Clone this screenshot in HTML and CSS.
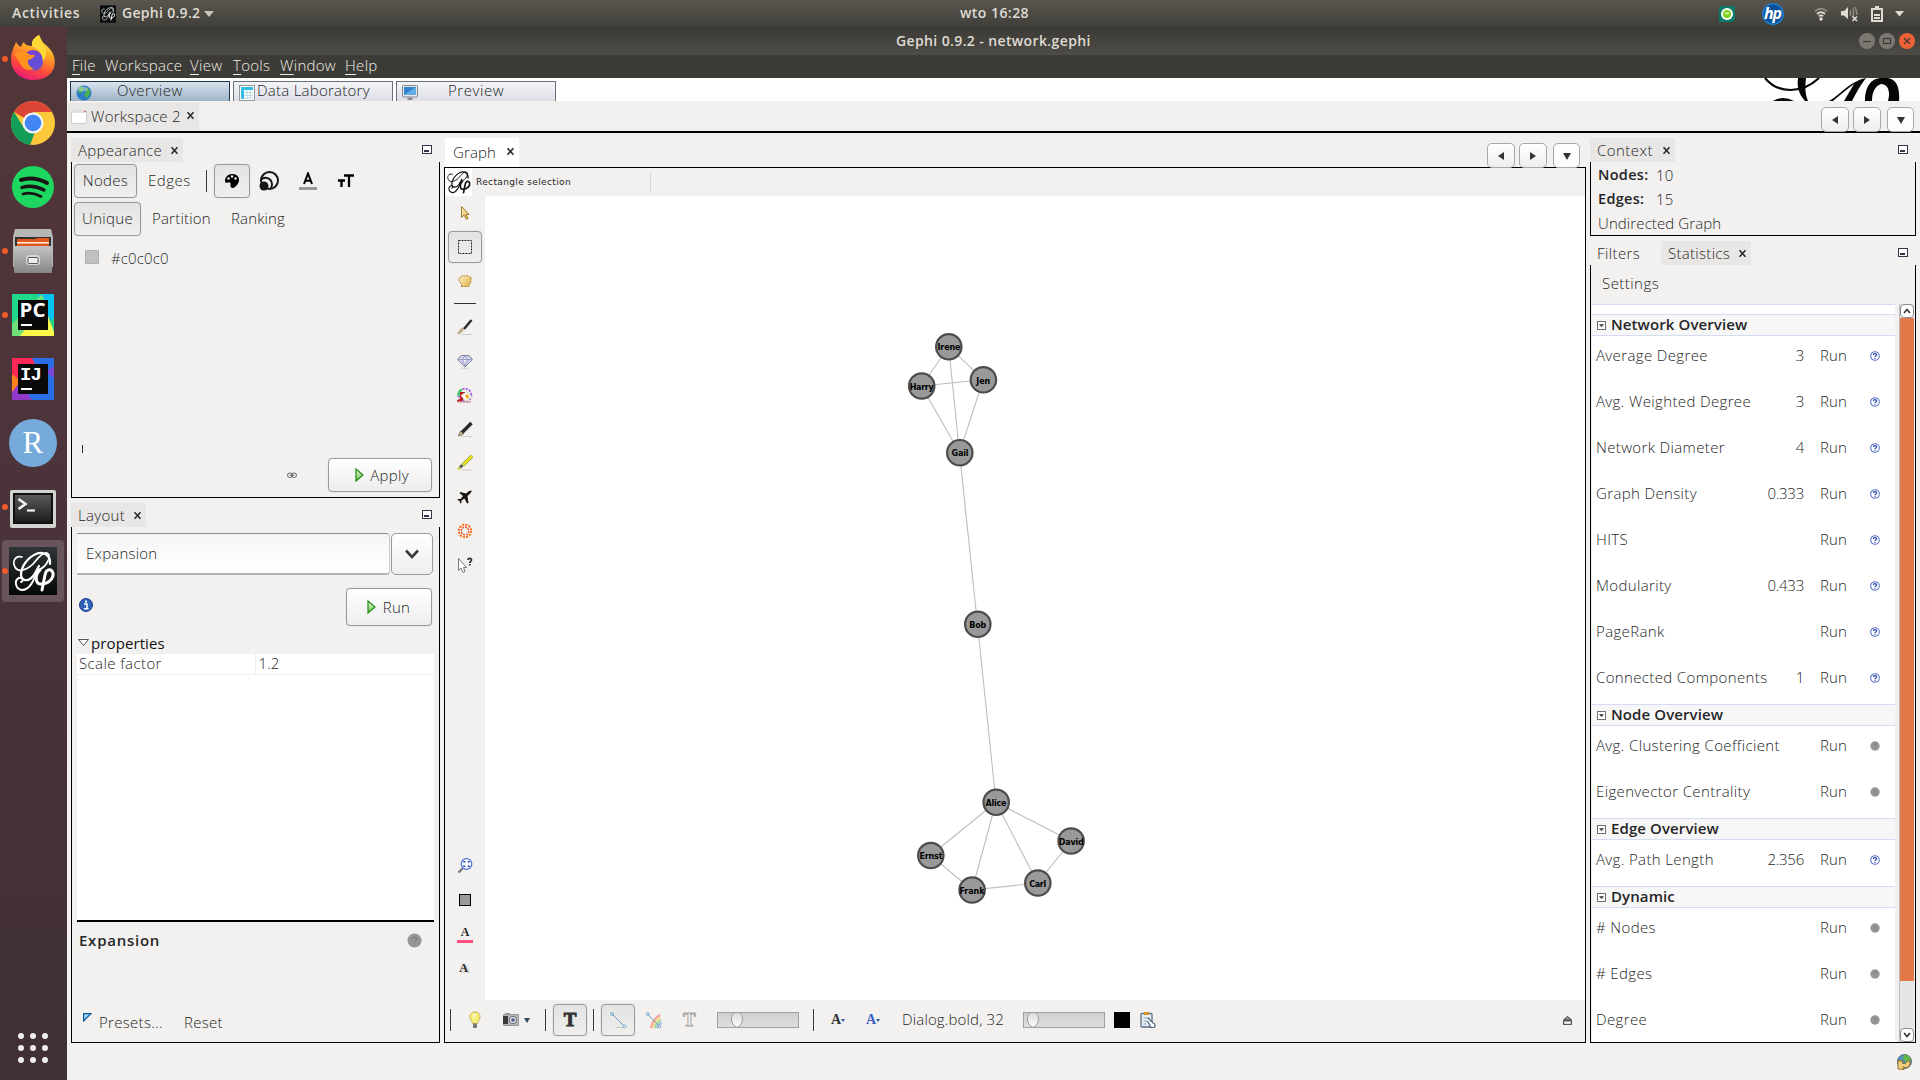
FILE: index.html
```html
<!DOCTYPE html>
<html lang="en">
<head>
<meta charset="utf-8">
<title>Gephi 0.9.2 - network.gephi</title>
<link rel="stylesheet" href="styles.css">
</head>
<body>
<svg class="defs" width="0" height="0">
  <defs>
    <linearGradient id="gGreen" x1="0" y1="0" x2="0" y2="1"><stop offset="0" stop-color="#f4fbe9"/><stop offset="1" stop-color="#6cc045"/></linearGradient>
    <linearGradient id="gGold" x1="0" y1="0" x2="1" y2="1"><stop offset="0" stop-color="#fff3cf"/><stop offset="1" stop-color="#dfae3c"/></linearGradient>
    <linearGradient id="gFox" x1="0.7" y1="0" x2="0.3" y2="1"><stop offset="0" stop-color="#fff44f"/><stop offset=".35" stop-color="#ffa524"/><stop offset=".7" stop-color="#ff4a3a"/><stop offset="1" stop-color="#e6177d"/></linearGradient>
    <linearGradient id="gTerm" x1="0" y1="0" x2="0" y2="1"><stop offset="0" stop-color="#5a5a5a"/><stop offset="1" stop-color="#1c1c1c"/></linearGradient>
    <linearGradient id="gFile" x1="0" y1="0" x2="0" y2="1"><stop offset="0" stop-color="#c4c4c4"/><stop offset="1" stop-color="#868686"/></linearGradient>
    <linearGradient id="gGephi" x1="0" y1="0" x2="0" y2="1"><stop offset="0" stop-color="#2f3436"/><stop offset="1" stop-color="#060808"/></linearGradient>
    <linearGradient id="gThumb" x1="0" y1="0" x2="0" y2="1"><stop offset="0" stop-color="#dcdcdc"/><stop offset="1" stop-color="#ffffff"/></linearGradient>
    <symbol id="help" viewBox="0 0 10 10"><circle cx="5" cy="5" r="4.300" fill="#fff" stroke="#5a74c8" stroke-width="1.100"/><path d="M3.400 4C3.400 2.200 6.600 2.200 6.600 4 6.600 5 5 5 5 5.900M5 6.700V7.800" fill="none" stroke="#2c4ba8" stroke-width="1.300"/></symbol>
    <symbol id="helpOff" viewBox="0 0 10 10"><circle cx="5" cy="5" r="4.7" fill="#969696"/><path d="M3.6 4C3.6 2.4 6.4 2.4 6.4 4 6.4 5 5 5 5 5.9M5 6.7V7.6" fill="none" stroke="#808080" stroke-width="1"/></symbol>
    <symbol id="mini" viewBox="0 0 10 9"><rect x=".5" y=".5" width="9" height="8" fill="#fff" stroke="#33364a"/><rect x="2" y="5" width="5" height="2" fill="#33364a"/></symbol>
    <symbol id="toggle" viewBox="0 0 9 9"><rect x=".5" y=".5" width="8" height="8" fill="#fff" stroke="#707070"/><path d="M2 3.2H7L4.5 6Z" fill="#333"/></symbol>
    <symbol id="play" viewBox="0 0 9 14"><path d="M1 1V13L8 7Z" fill="url(#gGreen)" stroke="#1f8a12" stroke-width="1.2"/></symbol>
    <symbol id="x" viewBox="0 0 9 9"><path d="M1.5 1.2L7.5 7.8M7.5 1.2L1.5 7.8" stroke="#2b2b2b" stroke-width="1.6"/></symbol>
    <symbol id="script" viewBox="0 0 48 48">
      <g fill="none" stroke="currentColor" stroke-linecap="round">
        <path stroke-width="1.700" d="M13 10C6 8 3 15 6 20C9 26 18 23 24 17C30 10 34 5 38 6C43 9 38 20 29 23"/>
        <path stroke-width="2.200" d="M41 17C42 8 34 4 27 7C18 11 12 20 12 28C13 35 20 35 25 28L30 19"/>
        <path stroke-width="1.900" d="M28 24C25 33 21 43 13 43C6 42 5 33 10 31C14 30 15 34 12 35"/>
        <path stroke-width="3" d="M31 23C26 27 26 36 31 37C39 38 45 31 44 26C42 21 37 22 36 28L33 43"/>
      </g>
    </symbol>
  </defs>
</svg>

<header class="topbar">
  <span class="activities">Activities</span>
  <svg class="app-ico" width="16" height="18" viewBox="0 0 48 52"><rect width="48" height="52" fill="#0c0f10"/><use href="#script" width="48" height="50" color="#fff"/></svg>
  <span class="app-name">Gephi 0.9.2</span>
  <svg width="10" height="6" viewBox="0 0 10 6"><path d="M0 0H10L5 6Z" fill="#c9c6be"/></svg>
  <span class="clock">wto 16:28</span>
  <div class="tray">
    <svg width="16" height="16" viewBox="0 0 16 16"><path d="M4 0H16V12Q16 16 12 16H0V4Q0 0 4 0Z" fill="#0b7a66"/><circle cx="8" cy="8" r="6" fill="#fff"/><circle cx="8" cy="8" r="4" fill="#7bd21c"/><ellipse cx="8" cy="7.3" rx="2.4" ry="1.2" fill="#c7f08c"/></svg>
    <svg class="hp" width="22" height="22" viewBox="0 0 22 22"><circle cx="11" cy="11" r="11" fill="#1b7fd0"/><circle cx="11" cy="11" r="9.500" fill="#0a4f9c"/><text x="10.500" y="15.500" text-anchor="middle" class="hp-t">hp</text></svg>
    <svg class="wifi" width="14" height="14" viewBox="0 0 14 14"><g fill="none" stroke-width="1.8"><path d="M1 4.5Q7-1 13 4.5" stroke="#8f8c84"/><path d="M3 7Q7 3.5 11 7" stroke="#dfdbd2"/><path d="M4.8 9.3Q7 7.5 9.2 9.3" stroke="#dfdbd2"/></g><circle cx="7" cy="12" r="1.8" fill="#dfdbd2"/></svg>
    <svg class="vol" width="17" height="16" viewBox="0 0 17 16"><path d="M0 5H3L7 1V13L3 9.500H0Z" fill="#dfdbd2"/><path d="M9 4.500Q10.500 7 9 9.500M11.500 2.500Q14 7 11.500 11M13.500 1Q16.500 5 15.500 9" fill="none" stroke="#8f8c84" stroke-width="1.5"/><path d="M11.500 10.500L16 15M16 10.500L11.500 15" stroke="#dfdbd2" stroke-width="1.700"/></svg>
    <svg class="bat" width="12" height="16" viewBox="0 0 12 16"><path d="M4 0H8V2H12V16H0V2H4Z" fill="#dfdbd2"/><path d="M2 4H10V14H2Z" fill="#494741"/><path d="M3 9H9M3 12H9" stroke="#dfdbd2" stroke-width="2"/></svg>
    <svg class="dn" width="9" height="6" viewBox="0 0 9 6"><path d="M0 0H9L4.500 5.500Z" fill="#dfdbd2"/></svg>
  </div>
</header>

<div class="desktop">
  <nav class="dock">
    <div class="slot on firefox"><svg width="46" height="48" viewBox="0 0 46 48"><path d="M23 46C9 46 1 36 1 25C1 18 4 13 6 8Q8 12 11 13Q12 9 14 8Q15 12 22 12Q21 5 29 1Q30 7 37 12C46 20 46 30 43 36C39 43 32 46 23 46Z" fill="url(#gFox)"/><circle cx="23" cy="26" r="10" fill="#7543d6"/><circle cx="25" cy="29" r="8" fill="#5a55d8" opacity=".6"/><path d="M4 20Q12 14 20 21Q25 20 25 22Q22 25 18 26Q17 32 24 35Q15 38 11 31Q8 25 4 20Z" fill="#ff9320"/><path d="M22 12Q32 16 33 27Q38 21 35 13L29 1Q21 5 22 12Z" fill="#ffd83a"/></svg></div>
    <div class="slot chrome"><svg width="44" height="44" viewBox="0 0 44 44"><circle cx="22" cy="22" r="22" fill="#fcc93a"/><path d="M22 22L3 11A22 22 0 0 1 41 11H22Z" fill="#dc4437"/><path d="M3 11L13 27L24 31L19 44A22 22 0 0 1 3 11Z" fill="#129d58"/><circle cx="22" cy="22" r="10.500" fill="#f4f4f4"/><circle cx="22" cy="22" r="8.300" fill="#4285f4"/></svg></div>
    <div class="slot spotify"><svg width="42" height="42" viewBox="0 0 42 42"><circle cx="21" cy="21" r="21" fill="#1ed760"/><g fill="none" stroke="#191414" stroke-linecap="round"><path d="M9 14Q22 10 35 17" stroke-width="4"/><path d="M10 21.500Q21 18 32 24" stroke-width="3.400"/><path d="M11 28Q20 25.500 29 30.500" stroke-width="2.800"/></g></svg></div>
    <div class="slot on files"><svg width="44" height="44" viewBox="0 0 44 44"><path d="M4 0H40L42 8V38H2V8Z" fill="#b6b6b6"/><rect x="4" y="8" width="36" height="10" fill="#33302e"/><path d="M6 10H24L26 9H38V18H6Z" fill="#e2571d"/><path d="M6 13H38V14.500H6Z" fill="#fff1e2"/><rect x="3" y="17" width="38" height="27" rx="1" fill="url(#gFile)"/><rect x="15" y="26" width="14" height="10" rx="3" fill="#d6d6d6"/><rect x="17" y="28.500" width="10" height="6" rx="1" fill="#eee" stroke="#555"/></svg></div>
    <div class="slot on pycharm"><svg width="42" height="42" viewBox="0 0 42 42"><rect width="42" height="42" fill="#21d789"/><path d="M26 0H42V24L28 34Z" fill="#07c3f2"/><path d="M0 30L22 8L30 0L34 10 10 42H0Z" fill="#6fe07a"/><path d="M34 42H8L30 14 36 22L42 38V42Z" fill="#fcf84a"/><rect x="6" y="6" width="30" height="30" fill="#0a0a0a"/><text x="7.500" y="23" class="jb" textLength="26" lengthAdjust="spacingAndGlyphs">PC</text><rect x="9" y="30" width="11" height="2" fill="#fff"/></svg></div>
    <div class="slot idea"><svg width="42" height="42" viewBox="0 0 42 42"><rect width="42" height="42" fill="#2a6fe8"/><path d="M0 0H20L26 12 10 20H0Z" fill="#fe2857"/><path d="M0 16L10 24 6 34H0Z" fill="#fc801d"/><path d="M0 34L8 24 20 42H0Z" fill="#9038c8"/><path d="M34 14L42 8V20Z" fill="#7a45d0"/><rect x="6" y="6" width="30" height="30" fill="#0a0a0a"/><text x="8" y="22" class="ij">IJ</text><rect x="9" y="30" width="11" height="2" fill="#fff"/></svg></div>
    <div class="slot rstudio"><div class="r-ball">R</div></div>
    <div class="slot on term"><svg width="46" height="38" viewBox="0 0 46 38"><rect width="46" height="38" rx="2" fill="#d3d3d0"/><rect x="3" y="3" width="40" height="31" fill="#111"/><rect x="5" y="5" width="36" height="27" fill="url(#gTerm)"/><path d="M8.500 9L15.500 14 8.500 19" fill="none" stroke="#f1f1ee" stroke-width="2.600"/><path d="M17 20.500H25" stroke="#f1f1ee" stroke-width="2.200"/></svg></div>
    <div class="slot on gephi"><div class="tile"><svg width="48" height="48" viewBox="0 0 48 48"><rect width="48" height="48" fill="url(#gGephi)"/><use href="#script" width="48" height="48" color="#fff"/></svg></div></div>
    <div class="apps"><i></i><i></i><i></i><i></i><i></i><i></i><i></i><i></i><i></i></div>
  </nav>

  <div class="window">
    <div class="titlebar"><span class="title">Gephi 0.9.2 - network.gephi</span>
      <svg class="wm" width="56" height="16" viewBox="0 0 56 16"><circle cx="8" cy="8" r="8" fill="#7a7871"/><circle cx="28" cy="8" r="8" fill="#7a7871"/><circle cx="48" cy="8" r="8" fill="#ee6237"/><g fill="none" stroke="#3a3935" stroke-width="1.200"><path d="M4 8.500H12"/><rect x="24.500" y="5.500" width="7" height="5"/><path d="M45 5L51 11M51 5L45 11"/></g></svg>
    </div>
    <div class="menubar"><span class="m1"><u>F</u>ile</span><span class="m2">Workspace</span><span class="m3"><u>V</u>iew</span><span class="m4"><u>T</u>ools</span><span class="m5"><u>W</u>indow</span><span class="m6"><u>H</u>elp</span></div>

    <div class="persp">
      <div class="pt active"><svg width="16" height="16" viewBox="0 0 16 16"><circle cx="8" cy="8" r="7.500" fill="#2c7fc4"/><path d="M3 2Q8 1 8 4L5 8 2 7ZM9 3Q15 3 14 9L11 13 8 10 10 7Z" fill="#4bb04b"/><ellipse cx="7" cy="4" rx="5" ry="2.500" fill="#fff" opacity=".35"/></svg><span class="w-ov">Overview</span></div>
      <div class="pt"><svg width="16" height="16" viewBox="0 0 16 16"><rect x=".5" y=".5" width="15" height="15" fill="#fff" stroke="#8e9aa0"/><rect x="2" y="2" width="12" height="3" fill="#35bfe8"/><rect x="2" y="2" width="3" height="12" fill="#35bfe8"/><path d="M5 7.500H14M5 10.500H14M5 13H14M8 5V14M11 5V14" stroke="#b8dce8"/></svg><span class="w-dl">Data Laboratory</span></div>
      <div class="pt"><svg width="16" height="16" viewBox="0 0 16 16"><rect x=".5" y=".5" width="15" height="11.500" rx="1" fill="#e8e8e8" stroke="#808890"/><rect x="2" y="2" width="12" height="8" fill="#2d84cc"/><path d="M2 10L14 2V10Z" fill="#62b0e6"/><path d="M5.500 12.500H10.500V15H5.500Z" fill="#8b8b8b"/></svg><span class="w-pv">Preview</span></div>
      <svg class="biglogo" width="145" height="23" viewBox="0 0 145 23"><path d="M5 0C18 16 42 16 59 0" fill="none" stroke="#070707" stroke-width="2.200"/><path d="M38 0H46C45 8 45 16 48 23H45C38 15 37 8 38 0Z" fill="#070707"/><path d="M13 23Q23 17 34 23Z" fill="#070707"/><path d="M69 23C81 16 90 3 106 0C100 8 96 15 92 23H84L94 6C87 11 80 17 73 23Z" fill="#070707"/><path d="M105 23C105 10 110 0 122 0C137 -2 140 10 139 23H128C131 12 127 6 121 6C115 8 112 14 112 23Z" fill="#070707"/></svg>
    </div>

    <div class="wsrow">
      <div class="wstab"><svg width="16" height="14" viewBox="0 0 16 14"><rect x=".5" y="1" width="15" height="12.500" rx="1.500" fill="#fff" stroke="#cfcccb"/><path d="M1 1H15V3H1Z" fill="#e4e0df"/><path d="M13 1.500H15" stroke="#d55"/></svg><span>Workspace 2</span><svg width="9" height="9"><use href="#x"/></svg></div>
      <div class="navs"><b><svg width="8" height="8" viewBox="0 0 8 8"><path d="M7 0V8L1 4Z"/></svg></b><b><svg width="8" height="8" viewBox="0 0 8 8"><path d="M1 0V8L7 4Z"/></svg></b><b class="last"><svg width="8" height="8" viewBox="0 0 8 8"><path d="M0 1H8L4 8Z"/></svg></b></div>
    </div>

    <main class="work">
      <section class="left">
        <div class="tabs"><div class="tab t-app"><span>Appearance</span><svg width="9" height="9"><use href="#x"/></svg></div><svg class="min" width="10" height="9"><use href="#mini"/></svg></div>
        <div class="panel appearance">
          <div class="brow"><span class="btn down nodes">Nodes</span><span class="edges">Edges</span><i class="vsep"></i>
            <span class="btn down pal"><svg width="16" height="16" viewBox="0 0 16 16"><path d="M8 1C3 1 1 5 1 8C1 10 3 10 4 9.500C6 9 7 10 6.500 12C6 15 9 16 11 14C13 12 15 10 15 7C15 3 12 1 8 1Z" fill="#000"/><circle cx="4.500" cy="5.500" r="1.200" fill="#fff"/><circle cx="8" cy="3.500" r="1.200" fill="#fff"/><circle cx="11.500" cy="5.500" r="1.200" fill="#fff"/></svg></span>
            <svg class="i-size" width="20" height="20" viewBox="0 0 20 20"><g fill="none" stroke="#151515" stroke-width="2"><circle cx="10.500" cy="9.500" r="8.500"/><path d="M2 8.500A5.500 5.500 0 1 1 11 18"/></g><circle cx="5" cy="15" r="4.500" fill="#151515"/></svg>
            <svg class="i-col" width="18" height="18" viewBox="0 0 18 18"><path d="M5 12L9 1.500L13 12M6.400 8.700H11.600" fill="none" stroke="#000" stroke-width="2"/><rect y="15" width="18" height="3" fill="#999"/></svg>
            <svg class="i-tt" width="16" height="14" viewBox="0 0 16 14"><path d="M6 1.500H16M11 1V13M0 6.500H7M3.500 6V13" fill="none" stroke="#000" stroke-width="2.300"/></svg>
          </div>
          <div class="brow second"><span class="btn down uniq">Unique</span><span class="part">Partition</span><span class="rank">Ranking</span></div>
          <div class="color"><i></i><span>#c0c0c0</span></div>
          <i class="caret"></i>
          <div class="apply"><svg width="10" height="7" viewBox="0 0 10 7"><rect x=".5" y="1" width="5" height="4.500" rx="2.200" fill="none" stroke="#666"/><rect x="4.500" y="1" width="5" height="4.500" rx="2.200" fill="none" stroke="#666"/><path d="M2.500 3.200H7.500" stroke="#666"/></svg><span class="btn b-apply"><svg width="9" height="14"><use href="#play"/></svg><span>Apply</span></span></div>
        </div>
        <div class="tabs lay"><div class="tab t-lay"><span>Layout</span><svg width="9" height="9"><use href="#x"/></svg></div><svg class="min" width="10" height="9"><use href="#mini"/></svg></div>
        <div class="panel layout">
          <div class="combo"><span>Expansion</span><b><svg width="14" height="10" viewBox="0 0 14 10"><path d="M1 1.500L7 8 13 1.500" fill="none" stroke="#3c3c3c" stroke-width="2.600"/></svg></b></div>
          <div class="runrow"><svg width="14" height="14" viewBox="0 0 14 14"><circle cx="7" cy="7" r="6.500" fill="#2f62b8" stroke="#1d3f88"/><path d="M5 6H8V10.500M5 10.800H9.500" stroke="#fff" stroke-width="1.500" fill="none"/><rect x="6" y="2.500" width="2" height="2" fill="#fff"/></svg><span class="btn b-run"><svg width="9" height="14"><use href="#play"/></svg><span>Run</span></span></div>
          <div class="prop"><svg width="11" height="7" viewBox="0 0 11 7"><path d="M.5 .5H10.500L5.500 6.500Z" fill="#fff" stroke="#555"/></svg><span>properties</span></div>
          <div class="sheet"><div class="srow"><span>Scale factor</span><span>1.2</span></div></div>
          <div class="desc"><b>Expansion</b><svg width="15" height="15"><use href="#helpOff"/></svg></div>
          <div class="presets"><svg width="9" height="9" viewBox="0 0 9 9"><path d="M.6 .6H8L.6 8Z" fill="#9fd2f2" stroke="#0a5ca0" stroke-width="1.200"/></svg><span class="ps">Presets...</span><span class="rs">Reset</span></div>
        </div>
      </section>

      <section class="center">
        <div class="tabs"><div class="tab t-graph"><span>Graph</span><svg width="9" height="9"><use href="#x"/></svg></div>
          <div class="navs"><b><svg width="8" height="8" viewBox="0 0 8 8"><path d="M7 0V8L1 4Z"/></svg></b><b><svg width="8" height="8" viewBox="0 0 8 8"><path d="M1 0V8L7 4Z"/></svg></b><b class="last"><svg width="8" height="8" viewBox="0 0 8 8"><path d="M0 1H8L4 8Z"/></svg></b></div></div>
        <div class="gbox">
          <div class="ghead"><svg class="glogo" width="27" height="28" viewBox="0 0 48 50"><use href="#script" width="48" height="48" y="1" color="#111"/></svg><span>Rectangle selection</span><i></i></div>
          <div class="gmid">
            <div class="tools">
              <svg class="tl" viewBox="0 0 16 16"><path d="M4.500 1.500V12.500L7 10 9.500 14.500 11 13.500 9 9.500H12Z" fill="url(#gGold)" stroke="#a07a2c"/></svg>
              <span class="btn down tl-on"><svg viewBox="0 0 16 16" width="16" height="16"><rect x="1.500" y="1.500" width="13" height="13" fill="none" stroke="#222" stroke-dasharray="2 1"/></svg></span>
              <svg class="tl" viewBox="0 0 16 16"><path d="M4.500 13.500V11L2 8V5L4 4.500 5 2.500 8 3 11 2.500 12.500 4H14V9L12 12V13.500Z" fill="url(#gGold)" stroke="#a98338" stroke-dasharray="2 1"/></svg>
              <i class="hsep"></i>
              <svg class="tl" viewBox="0 0 16 16"><path d="M4 15.500H15" stroke="#ccc"/><path d="M14.500 1L7 10" stroke="#2b2b2b" stroke-width="2.500"/><path d="M7 9.500Q5 14 1 15Q2 11 5 9Z" fill="#cdbd94" stroke="#8c7c58" stroke-width=".6"/></svg>
              <svg class="tl" viewBox="0 0 16 16"><path d="M4 2.500H12L15.500 6.500 8 14 .500 6.500Z" fill="#cfd1ea" stroke="#8083a6"/><path d="M1 6.500H15M5.500 6.500L8 13 10.500 6.500 8 3Z" fill="#e6e7f8" stroke="#9194b8" stroke-width=".8"/><path d="M4 15.200H12" stroke="#ccc"/></svg>
              <svg class="tl" viewBox="0 0 16 16"><circle cx="8" cy="8" r="6.300" fill="none" stroke="#a35be0" stroke-width="2" stroke-dasharray="2 1.300"/><path d="M1.500 9A6.300 6.300 0 0 1 5 2.500" fill="none" stroke="#42c86a" stroke-width="2.400"/><path d="M3 5H10V7L5 14.500H0V13L3 12Z" fill="#b91d22"/><path d="M4 8.500L10 4.500 15 10 9 14.500Z" fill="#fffdf2" stroke="#ccc"/><path d="M8 8L11 7.500 12.500 10 10 12Z" fill="#f0a818"/><path d="M0 15H14" stroke="#c88"/></svg>
              <svg class="tl" viewBox="0 0 16 16"><path d="M4 15.500H15" stroke="#ccc"/><path d="M14.500 2L5 11.500" stroke="#2b2b2b" stroke-width="3.600"/><path d="M3.500 10L6.500 13 1.500 15Z" fill="#d8c48a" stroke="#333" stroke-width=".6"/></svg>
              <svg class="tl" viewBox="0 0 16 16"><path d="M4 15H15" stroke="#ccc"/><path d="M15 1L6 10" stroke="#9a9414" stroke-width="3.400"/><path d="M15 1L6 10" stroke="#f1ea1c" stroke-width="2"/><path d="M5.500 10L3 12.500" stroke="#555" stroke-width="3"/><path d="M3 12.500L1 14.500" stroke="#d0c91a" stroke-width="2"/></svg>
              <svg class="tl" viewBox="0 0 16 16"><path d="M14.500 1.500Q15 3.500 10.500 7L11.500 14 10 14.500 7.500 9.500 4.500 11.500V14L3.500 14.500 2.500 12 .500 11 1 10H3.500L6 7 2.500 4 3.500 3 9 4.500Q12.500 1 14.500 1.500Z" fill="#1a1713"/></svg>
              <svg class="tl" viewBox="0 0 16 16"><g fill="none" stroke="#ff7018"><circle cx="8" cy="8" r="6.200" stroke-width="2" stroke-dasharray="2.100 1.100"/><circle cx="8" cy="8" r="3.800" stroke="#f2452a" stroke-width="1.300" stroke-dasharray="2 .9"/></g></svg>
              <svg class="tl" viewBox="0 0 16 16"><path d="M1.500 1.500V13.500L4 11 6 15.500 8 14.500 6.500 10.500H9.500Z" fill="#fff" stroke="#777"/><path d="M11 3C11 .8 14.500 .8 14.500 3 14.500 4.500 12.800 4.500 12.800 6M12.800 7V8.500" fill="none" stroke="#333" stroke-width="1.700"/></svg>
              <div class="grow"></div>
              <svg class="tl" viewBox="0 0 16 16"><path d="M5.500 10.500L1.500 14.500" stroke="#777" stroke-width="2.400"/><circle cx="9.500" cy="6" r="5.300" fill="#fff" stroke="#4b6fd4" stroke-width="1.200"/><path d="M7 5V3.500H8.500M10.500 3.500H12V5M12 7V8.500H10.500M8.500 8.500H7V7" fill="none" stroke="#2e50b8" stroke-width="1.200"/></svg>
              <svg class="tl" viewBox="0 0 16 16"><rect x="2.500" y="2.500" width="11" height="11" fill="#999" stroke="#000"/></svg>
              <div class="tl ta"><b>A</b><i></i></div>
              <div class="tl ta shade"><b>A</b></div>
            </div>
            <svg class="canvas" width="1100" height="804" viewBox="485 196 1100 804">
              <g class="e"><path d="M948.700 346.700L921.500 386M948.700 346.700L983.300 379.700M948.700 346.700L959.500 452.700M921.500 386L983.300 379.700M921.500 386L959.500 452.700M983.300 379.700L959.500 452.700M959.500 452.700L977.500 624.300L996 802.300M996 802.300L930.700 855.300M996 802.300L972 890M996 802.300L1037.700 883M996 802.300L1071 841M930.700 855.300L972 890M972 890L1037.700 883L1071 841"/></g>
              <g class="n"><circle cx="948.800" cy="346.800" r="12.700"/><circle cx="921.700" cy="386" r="12.700"/><circle cx="983.400" cy="379.800" r="12.700"/><circle cx="959.800" cy="452.700" r="12.700"/><circle cx="977.800" cy="624.300" r="12.700"/><circle cx="996.200" cy="802.300" r="12.700"/><circle cx="930.800" cy="855.500" r="12.700"/><circle cx="972.100" cy="890" r="12.700"/><circle cx="1037.800" cy="883" r="12.700"/><circle cx="1071.100" cy="841" r="12.700"/></g>
              <g class="l"><text x="949" y="350" textLength="23">Irene</text><text x="921.700" y="390" textLength="24">Harry</text><text x="983.300" y="383.500" textLength="14">Jen</text><text x="960" y="456" textLength="17">Gail</text><text x="977.700" y="627.500" textLength="17">Bob</text><text x="996" y="805.800" textLength="21">Alice</text><text x="931" y="858.800" textLength="23">Ernst</text><text x="972" y="893.500" textLength="25">Frank</text><text x="1037.700" y="886.500" textLength="17">Carl</text><text x="1071.300" y="844.500" textLength="25">David</text></g>
            </svg>
          </div>
          <div class="gfoot">
            <i class="vsep"></i>
            <svg class="f1" width="16" height="18" viewBox="0 0 16 18"><path d="M8 1C3.500 1 2 5 3.500 8C5 10.500 5 11 5.500 12.500H10.500C11 11 11 10.500 12.500 8C14 5 12.500 1 8 1Z" fill="#f8ee7c" stroke="#b6a63a" stroke-width=".8"/><path d="M6 4Q7 2.500 9 3L7 8Z" fill="#fffde0"/><rect x="6" y="12.500" width="4" height="4.500" rx="1" fill="#777"/></svg>
            <svg class="f2" width="16" height="16" viewBox="0 0 16 16"><rect y="2.500" width="16" height="11" rx="1" fill="#b5b5b5" stroke="#777" stroke-width=".7"/><rect x="0" y="4" width="5" height="8" fill="#3a3a3a"/><circle cx="10" cy="8" r="3.700" fill="#dcdce6" stroke="#777"/><circle cx="10" cy="8" r="1.800" fill="#4b5a8c"/><rect x="2" y="1" width="5" height="2" fill="#999"/></svg>
            <svg class="f3" width="6" height="5" viewBox="0 0 6 5"><path d="M0 0H6L3 5Z" fill="#33475c"/></svg>
            <i class="vsep s2"></i>
            <span class="btn down fb f4"><b>T</b></span>
            <i class="vsep s3"></i>
            <span class="btn down fb f5"><svg width="17" height="17" viewBox="0 0 17 17"><path d="M6 15.500H15" stroke="#ccc"/><path d="M2 2L15 15" stroke="#6b9cc8"/><circle cx="2" cy="2" r="1.400" fill="#fff" stroke="#6b9cc8"/><circle cx="14.500" cy="14.500" r="1.400" fill="#fff" stroke="#6b9cc8"/></svg></span>
            <svg class="f6" width="16" height="17" viewBox="0 0 16 17"><g fill="none" stroke-width="2.200"><path d="M5 16Q7 7 14 3" stroke="#f2a0a0"/><path d="M7 16Q8 9 14.500 5.500" stroke="#f7dc8c"/><path d="M9 16Q10 11 15 8" stroke="#a4dca0"/><path d="M11 16Q12 13 15.500 10.500" stroke="#a4c0ec"/></g><path d="M1.500 2L14 15" stroke="#6b9cc8"/><circle cx="1.800" cy="2" r="1.300" fill="#fff" stroke="#6b9cc8"/><circle cx="13.500" cy="14.500" r="1.300" fill="#fff" stroke="#7a88c8"/></svg>
            <b class="f7">T</b>
            <div class="slider f8"><svg width="12" height="16" viewBox="0 0 12 16"><path d="M6 .5C10 .5 11.500 3 11.500 7C11.500 11 9 14 6 15.500C3 14 .5 11 .5 7C.5 3 2 .5 6 .5Z" fill="url(#gThumb)" stroke="#999"/></svg></div>
            <i class="vsep s4"></i>
            <b class="fa">A<em></em></b><b class="fa blue">A<em></em></b>
            <span class="font">Dialog.bold, 32</span>
            <div class="slider f9"><svg width="12" height="16" viewBox="0 0 12 16"><path d="M6 .5C10 .5 11.500 3 11.500 7C11.500 11 9 14 6 15.500C3 14 .5 11 .5 7C.5 3 2 .5 6 .5Z" fill="url(#gThumb)" stroke="#999"/></svg></div>
            <i class="blk"></i>
            <svg class="f10" width="16" height="16" viewBox="0 0 16 16"><rect x="1" y="1.500" width="11" height="13.500" rx="1" fill="#e8eef4" stroke="#5a7186" stroke-width="1.300"/><rect x="4" y="0" width="5" height="3" fill="#d9962a"/><path d="M3.500 6H9.500M3.500 9H7M3.500 12H6" stroke="#8fa3b5"/><path d="M8 6L13 11A2.500 2.500 0 1 1 10 13.500L7.500 9" fill="#fff" stroke="#486078" stroke-width="1.200"/></svg>
            <svg class="f11" width="9" height="9" viewBox="0 0 9 9"><path d="M4.500 .5L8.500 4H.5Z" fill="#999" stroke="#333"/><rect x=".6" y="5" width="7.800" height="3.300" fill="#fff" stroke="#333"/></svg>
          </div>
        </div>
      </section>

      <section class="right">
        <div class="tabs"><div class="tab t-ctx"><span>Context</span><svg width="9" height="9"><use href="#x"/></svg></div><svg class="min" width="10" height="9"><use href="#mini"/></svg></div>
        <div class="panel context"><div><b>Nodes:</b><span>10</span></div><div><b class="eb">Edges:</b><span>15</span></div><div><span class="ug">Undirected Graph</span></div></div>
        <div class="tabs st"><span class="filters">Filters</span><div class="tab t-stat"><span>Statistics</span><svg width="9" height="9"><use href="#x"/></svg></div><svg class="min" width="10" height="9"><use href="#mini"/></svg></div>
        <div class="panel stats">
          <div class="settings">Settings</div>
          <div class="scroll">
            <div class="list">
              <div class="pad"></div>
              <h3><svg width="9" height="9"><use href="#toggle"/></svg><span>Network Overview</span></h3>
              <div class="row"><span>Average Degree</span><em>3</em><span>Run</span><svg><use href="#help"/></svg></div>
              <div class="row"><span>Avg. Weighted Degree</span><em>3</em><span>Run</span><svg><use href="#help"/></svg></div>
              <div class="row"><span>Network Diameter</span><em>4</em><span>Run</span><svg><use href="#help"/></svg></div>
              <div class="row"><span>Graph Density</span><em>0.333</em><span>Run</span><svg><use href="#help"/></svg></div>
              <div class="row"><span>HITS</span><em></em><span>Run</span><svg><use href="#help"/></svg></div>
              <div class="row"><span>Modularity</span><em>0.433</em><span>Run</span><svg><use href="#help"/></svg></div>
              <div class="row"><span>PageRank</span><em></em><span>Run</span><svg><use href="#help"/></svg></div>
              <div class="row"><span>Connected Components</span><em>1</em><span>Run</span><svg><use href="#help"/></svg></div>
              <h3><svg width="9" height="9"><use href="#toggle"/></svg><span>Node Overview</span></h3>
              <div class="row"><span>Avg. Clustering Coefficient</span><em></em><span>Run</span><svg><use href="#helpOff"/></svg></div>
              <div class="row"><span>Eigenvector Centrality</span><em></em><span>Run</span><svg><use href="#helpOff"/></svg></div>
              <h3><svg width="9" height="9"><use href="#toggle"/></svg><span>Edge Overview</span></h3>
              <div class="row"><span>Avg. Path Length</span><em>2.356</em><span>Run</span><svg><use href="#help"/></svg></div>
              <h3><svg width="9" height="9"><use href="#toggle"/></svg><span>Dynamic</span></h3>
              <div class="row"><span># Nodes</span><em></em><span>Run</span><svg><use href="#helpOff"/></svg></div>
              <div class="row"><span># Edges</span><em></em><span>Run</span><svg><use href="#helpOff"/></svg></div>
              <div class="row"><span>Degree</span><em></em><span>Run</span><svg><use href="#helpOff"/></svg></div>
            </div>
            <div class="bar"><b><svg width="8" height="6" viewBox="0 0 8 6"><path d="M1 5L4 1.500 7 5" fill="none" stroke="#333" stroke-width="1.600"/></svg></b><i></i><b><svg width="8" height="6" viewBox="0 0 8 6"><path d="M1 1L4 4.500 7 1" fill="none" stroke="#333" stroke-width="1.600"/></svg></b></div>
          </div>
        </div>
      </section>
    </main>
    <footer class="status"><svg width="15" height="16" viewBox="0 0 15 16"><circle cx="7.500" cy="7.500" r="7" fill="#4d94b8" stroke="#456" stroke-width=".8"/><path d="M7 1Q13 0 14 7L10 9 6 5Z" fill="#63b84c"/><path d="M1 7L6 6.500 5 9Q9 11 10 7H13V10Q12 15 6 13L7 15.500 1 15Z" fill="#f0cf7c" stroke="#8b6420" stroke-width=".9"/></svg></footer>
  </div>
</div>
</body>
</html>
```
FILE: styles.css
```css
* { box-sizing: border-box; }
body {
  margin: 0; width: 1920px; height: 1080px; overflow: hidden;
  display: flex; flex-direction: column;
  font: 300 15px/20px "Open Sans", "Noto Sans", sans-serif;
  letter-spacing: .3px; color: #262626; background: #f2f1ef;
}
svg { display: block; flex: none; }
span, em, b { white-space: nowrap; }
em, i { font-style: normal; }
i { display: block; flex: none; }
.defs { position: absolute; }

/* top bar */
.topbar {
  height: 27px; flex: none; display: flex; align-items: center; padding-left: 12px;
  background: linear-gradient(#59564e, #403f3a);
  color: #dfdbd2; font-weight: 600; font-size: 14px; letter-spacing: .1px;
}
.topbar span { padding-bottom: 2px; }
.activities { width: 88px; letter-spacing: .7px; }
.app-name { width: 76px; margin: 0 6px 0 6px; letter-spacing: .3px; }
.clock { width: 70px; margin-left: 746px; letter-spacing: .45px; }
.tray { display: flex; align-items: center; margin-left: 689px; }
.hp { margin-left: 27px; }
.wifi { margin-left: 30px; }
.vol { margin-left: 13px; }
.bat { margin-left: 13px; }
.dn { margin-left: 12px; }
.hp-t { font: italic bold 16px "Open Sans", sans-serif; fill: #fff; letter-spacing: -1px; }

.desktop { flex: 1; display: flex; min-height: 0; }

/* dock */
.dock {
  width: 67px; flex: none; display: flex; flex-direction: column;
  background: linear-gradient(#523639, #4a333a 50%, #3f3033);
}
.slot { height: 64px; display: flex; align-items: center; padding-left: 10px; position: relative; flex: none; }
.on::before { content: ""; position: absolute; left: 2px; top: 50%; width: 6px; height: 6px; margin-top: -3px; border-radius: 50%; background: #ee5a2a; }
.firefox svg { margin-top: -2px; }
.chrome { padding-left: 11px; }
.spotify, .pycharm, .idea { padding-left: 12px; }
.files { padding-left: 11px; }
.rstudio { padding-left: 9px; }
.term svg { margin-top: 3px; }
.gephi { padding-left: 2px; }
.tile { width: 62px; height: 62px; border-radius: 4px; background: rgba(255,255,255,.17); padding: 7px; }
.r-ball { width: 48px; height: 48px; border-radius: 50%; background: #75aadb; color: #fff; text-align: center; font: 31px/48px "Liberation Serif", serif; }
.jb { font: bold 20px "Open Sans", sans-serif; fill: #fff; letter-spacing: 0; }
.ij { font: bold 19px "Liberation Mono", monospace; fill: #fff; letter-spacing: -1px; }
.apps { margin: auto 0 17px 18px; display: grid; grid-template-columns: repeat(3, 6px); gap: 6px; }
.apps i { width: 6px; height: 6px; border-radius: 50%; background: #f0eeec; }

/* window */
.window { flex: 1; min-width: 0; display: flex; flex-direction: column; }
.titlebar { height: 28px; flex: none; display: flex; align-items: center; background: linear-gradient(#3b3a36, #4d4c46); color: #dfdbd2; font-weight: 600; font-size: 14px; letter-spacing: .38px; }
.title { width: 200px; margin-left: 829px; }
.wm { margin-left: 763px; }
.menubar { height: 23px; flex: none; display: flex; align-items: center; background: #3c3b37; color: #f0ece3; padding: 0 0 4px 5px; }
.menubar u { text-underline-offset: 3px; text-decoration-thickness: 1px; }
.m1 { width: 33px; } .m2 { width: 85px; } .m3 { width: 43px; } .m4 { width: 47px; } .m5 { width: 65px; }

.persp { height: 23px; flex: none; display: flex; background: #fff; padding: 3px 0 0 3px; gap: 3px; }
.pt { width: 160px; height: 20px; border: 1px solid #6b7078; border-bottom: 0; background: linear-gradient(#f3f4f7, #dcdfe6); display: flex; align-items: center; padding-left: 5px; }
.pt svg { margin-top: 2px; }
.pt span { padding-bottom: 3px; }
.active { background: linear-gradient(#d9e3ee, #9db4c8); border-color: #1f3648; }
.w-ov { margin-left: 25px; letter-spacing: .5px; } .w-dl { margin-left: 2px; letter-spacing: .25px; } .w-pv { margin-left: 30px; letter-spacing: .55px; }
.biglogo { margin: -3px 15px 0 auto; }

.wsrow { height: 32px; flex: none; display: flex; justify-content: space-between; border-bottom: 2px solid #000; padding: 2px 6px 0 1px; }
.wstab { width: 131px; background: #e9e7e5; display: flex; align-items: center; padding: 0 0 1px 3px; height: 28px; }
.wstab span { width: 95px; margin-left: 4px; padding-bottom: 1px; letter-spacing: .25px; }
.wstab svg + span + svg { margin-top: -2px; }
.navs { display: flex; padding-top: 4px; height: 29px; }
.navs b { width: 28px; height: 25px; margin-right: 4px; border: 1px solid #a8a8a8; border-radius: 5px; background: linear-gradient(#fff, #eee); display: flex; align-items: center; justify-content: center; }
.navs .last { width: 27px; margin: 0 0 0 2px; background: #fdfdfd; }
.navs svg { fill: #333; }
.wsrow .navs { margin-right: 0; }

.work { flex: 1; display: flex; min-height: 0; padding: 5px 4px 0 4px; }
.status { height: 37px; flex: none; display: flex; padding: 11px 8px 0 0; justify-content: flex-end; }
.tabs { height: 24px; flex: none; display: flex; }
.tab { background: #e9e7e5; display: flex; align-items: center; padding-left: 7px; }
.min { margin: 7px 8px 0 auto; }
.panel { border: 1px solid #000; border-top: 0; }
.btn { display: flex; align-items: center; justify-content: center; border: 1px solid #9a9a9a; border-radius: 4px; background: linear-gradient(#fff, #ededed); box-shadow: 0 0 1px #aaa; flex: none; }
.down { background: linear-gradient(#e3e3e2, #efefee); }
.vsep { width: 1px; height: 22px; background: #3c3c3c; }

/* left column */
.left { width: 369px; flex: none; display: flex; flex-direction: column; }
.t-app { width: 112px; } .t-app span { width: 92px; letter-spacing: .3px; }
.t-lay { width: 75px; } .t-lay span { width: 55px; }
.appearance { height: 336px; padding: 2px 7px 0 2px; display: flex; flex-direction: column; }
.brow { height: 34px; display: flex; align-items: center; flex: none; }
.second { margin-top: 4px; }
.nodes { width: 63px; height: 34px; }
.edges { width: 58px; margin-left: 11px; }
.nodes, .edges, .uniq, .part, .rank { padding-bottom: 2px; }
.edges { letter-spacing: .5px; }
.pal { width: 36px; height: 34px; margin-left: 7px; }
.i-size { margin-left: 9px; } .i-col { margin-left: 20px; } .i-tt { margin-left: 21px; }
.uniq { width: 67px; height: 34px; }
.part { width: 79px; margin-left: 11px; letter-spacing: .2px; }
.rank { letter-spacing: .15px; }
.color { display: flex; align-items: center; margin: 12px 0 0 10px; height: 20px; }
.color i { width: 14px; height: 14px; background: #c0c0c0; border: 1px solid #b0b0b0; margin: -2px 12px 0 1px; }
.color span { letter-spacing: .15px; }
.caret { width: 1px; height: 8px; background: #333; margin: 177px 0 0 8px; }
.apply { display: flex; align-items: center; justify-content: flex-end; margin-top: 5px; }
.b-apply { width: 104px; height: 34px; margin-left: 31px; gap: 6px; }
.b-apply svg { margin-left: 4px; }
.b-apply span, .b-run span { padding-bottom: 1px; }
.lay { margin-top: 5px; }
.layout { flex: 1; padding: 6px 5px 0 5px; display: flex; flex-direction: column; }
.combo { height: 42px; display: flex; flex: none; }
.combo span { width: 313px; border-top: 1px solid #8e8e8e; border-bottom: 2px solid #b5b5b5; background: linear-gradient(#f5f5f5, #fff); border-right: 1px solid #ccc; border-radius: 0 4px 4px 0; padding: 10px 0 0 9px; line-height: 19px; letter-spacing: .2px; }
.combo b { width: 42px; margin-left: 1px; border: 1px solid #9a9a9a; border-radius: 5px; background: linear-gradient(#fff, #eee); display: flex; align-items: center; justify-content: center; }
.runrow { display: flex; align-items: center; justify-content: space-between; margin-top: 13px; padding: 0 2px 0 2px; height: 38px; flex: none; }
.runrow > svg { margin-top: -4px; }
.b-run { width: 86px; height: 38px; gap: 7px; }
.b-run svg { margin-left: -1px; }
.prop { display: flex; align-items: center; height: 22px; margin: 6px 0 0 1px; color: #111; font-weight: 400; font-size: 15px; letter-spacing: .1px; flex: none; }
.prop svg { margin-top: -2px; }
.prop span { margin-left: 2px; padding-bottom: 1px; }
.sheet { background: #fff; border-bottom: 2px solid #000; height: 268px; flex: none; }
.srow { height: 21px; display: flex; align-items: center; border-bottom: 1px solid #efeeec; }
.srow span { width: 179px; padding-left: 2px; border-right: 1px solid #efeeec; height: 20px; line-height: 19px; letter-spacing: .4px; }
.srow span + span { border: 0; padding-left: 3px; letter-spacing: .1px; }
.desc { display: flex; justify-content: space-between; align-items: center; margin-top: 8px; padding: 0 12px 0 2px; }
.desc b, .context b, h3 { font-weight: 600; }
.desc b { letter-spacing: .75px; }
.presets { display: flex; margin: 62px 0 0 6px; }
.presets svg { margin-top: 1px; }
.ps { width: 85px; margin-left: 7px; }

/* graph */
.center { width: 1142px; flex: none; margin-left: 4px; display: flex; flex-direction: column; }
.center .tabs { height: 29px; justify-content: space-between; padding-right: 6px; }
.center .navs { padding-top: 5px; height: 30px; position: relative; }
.t-graph { width: 74px; background: #fff; margin-left: 1px; padding: 0 0 2px 8px; }
.t-graph span { width: 53px; letter-spacing: .1px; }
.gbox { flex: 1; border: 1px solid #000; display: flex; flex-direction: column; min-height: 0; }
.ghead { height: 28px; flex: none; display: flex; align-items: center; }
.glogo { background: #fff; }
.ghead span { font: 9px "DejaVu Sans", sans-serif; letter-spacing: .36px; margin-left: 4px; width: 174px; }
.ghead i { width: 1px; height: 20px; background: #dcdad8; }
.gmid { height: 804px; flex: none; display: flex; }
.tools { width: 40px; display: flex; flex-direction: column; align-items: center; padding-top: 9px; }
.tl { width: 16px; height: 16px; margin-bottom: 18px; flex: none; }
.tl-on { width: 34px; height: 32px; margin: -8px 0 10px; }
.hsep { width: 22px; height: 1px; background: #333; margin: -4px 0 15px; }
.grow { flex: 1; }
.ta { text-align: center; font: bold 12px/13px "Liberation Serif", serif; letter-spacing: 0; }
.ta b { display: block; }
.ta i { height: 3px; background: #ff4f7e; margin-top: 1px; }
.ta.shade { text-indent: -3px; }
.shade b { text-shadow: 2px 1px 0 #ccc; padding-top: 2px; }
.tools .shade { margin-bottom: 24px; }
.canvas { background: #fff; }
.e { fill: none; stroke: #bdbdbd; stroke-width: 1.1; }
.n { fill: #999; stroke: #4c4c4c; stroke-width: 2.2; }
.l { font: bold 8px "DejaVu Sans", sans-serif; fill: #000; text-anchor: middle; letter-spacing: 0; }
.gfoot { flex: 1; display: flex; align-items: center; padding: 0 13px 2px 5px; }
.f1 { margin-left: 16px; } .f2 { margin-left: 20px; } .f3 { margin-left: 5px; }
.s2 { margin-left: 15px; }
.fb { width: 34px; height: 32px; }
.f4 { margin-left: 7px; }
.fb b, .f7 { font: bold 19px "Liberation Serif", serif; letter-spacing: 0; color: #333; -webkit-text-stroke: 1px #333; }
.s3 { margin-left: 6px; } .f5 { margin-left: 7px; }
.f6 { margin-left: 11px; }
.f7 { margin-left: 21px; width: 14px; color: #f4f4f4; -webkit-text-stroke: 1px #aaa; }
.slider { width: 82px; height: 16px; border: 1px solid #a0a0a0; background: linear-gradient(#cfcfcf, #dedede); flex: none; }
.slider svg { margin: -1px 0 0 13px; }
.f8 { margin-left: 20px; }
.s4 { margin-left: 14px; }
.fa { width: 35px; display: flex; align-items: center; font: bold 14px "Liberation Serif", serif; letter-spacing: 0; color: #333; }
.s4 + .fa { margin-left: 17px; }
.fa em { width: 0; border: 2px solid transparent; border-top: 3px solid #2a5ca8; border-bottom: 0; }
.blue { color: #3a5fc4; }
.font { width: 121px; letter-spacing: .15px; margin-left: 1px; }
.gfoot .font { padding-bottom: 2px; }
.f9 svg { margin-left: 3px; }
.blk { width: 16px; height: 16px; background: #000; margin-left: 9px; }
.f10 { margin-left: 10px; }
.f11 { margin-left: auto; }

/* right column */
.right { width: 326px; flex: none; margin-left: 4px; display: flex; flex-direction: column; }
.t-ctx { width: 85px; } .t-ctx span { width: 65px; letter-spacing: .45px; }
.context { height: 74px; padding: 1px 0 0 7px; line-height: 24px; }
.context div { display: flex; }
.context b { width: 58px; font-size: 14.500px; letter-spacing: .3px; }
.context .ug { letter-spacing: .1px; }
.st { margin-top: 5px; }
.filters { width: 64px; margin: 2px 0 0 7px; letter-spacing: .4px; }
.t-stat { width: 90px; } .t-stat span { width: 70px; }
.stats { flex: 1; min-height: 0; padding-left: 1px; display: flex; flex-direction: column; }
.settings { height: 39px; padding: 8px 0 0 10px; flex: none; letter-spacing: .45px; }
.scroll { flex: 1; min-height: 0; display: flex; justify-content: space-between; padding-right: 1px; }
.list { width: 303px; background: #fff; border-top: 1px solid #d3dcf3; overflow: hidden; }
.pad { height: 9px; }
h3 { margin: 0; height: 22px; border: 1px solid #d3dcf3; border-width: 1px 0; background: #f7f7f7; display: flex; align-items: center; padding-left: 5px; gap: 5px; font-size: 15px; letter-spacing: .1px; }
h3 span { padding-bottom: 2px; }
.row { height: 46px; display: grid; grid-template-columns: 149px 59px 54px 10px; padding: 9px 0 0 4px; align-items: start; letter-spacing: .36px; }
.row em { text-align: right; letter-spacing: -.25px; }
.row em + span { padding-left: 16px; letter-spacing: .1px; }
.row svg { width: 10px; height: 10px; margin: 6px 0 0 12px; }
.bar { width: 15px; background: #e6e6e6; border-left: 1px solid #bbb; display: flex; flex-direction: column; height: 738px; }
.bar b { width: 14px; height: 14px; border: 1px solid #8a8a8a; border-radius: 4px; background: #fff; display: flex; align-items: center; justify-content: center; flex: none; }
.bar i { height: 663px; background: #e57848; margin-bottom: auto; }
```
